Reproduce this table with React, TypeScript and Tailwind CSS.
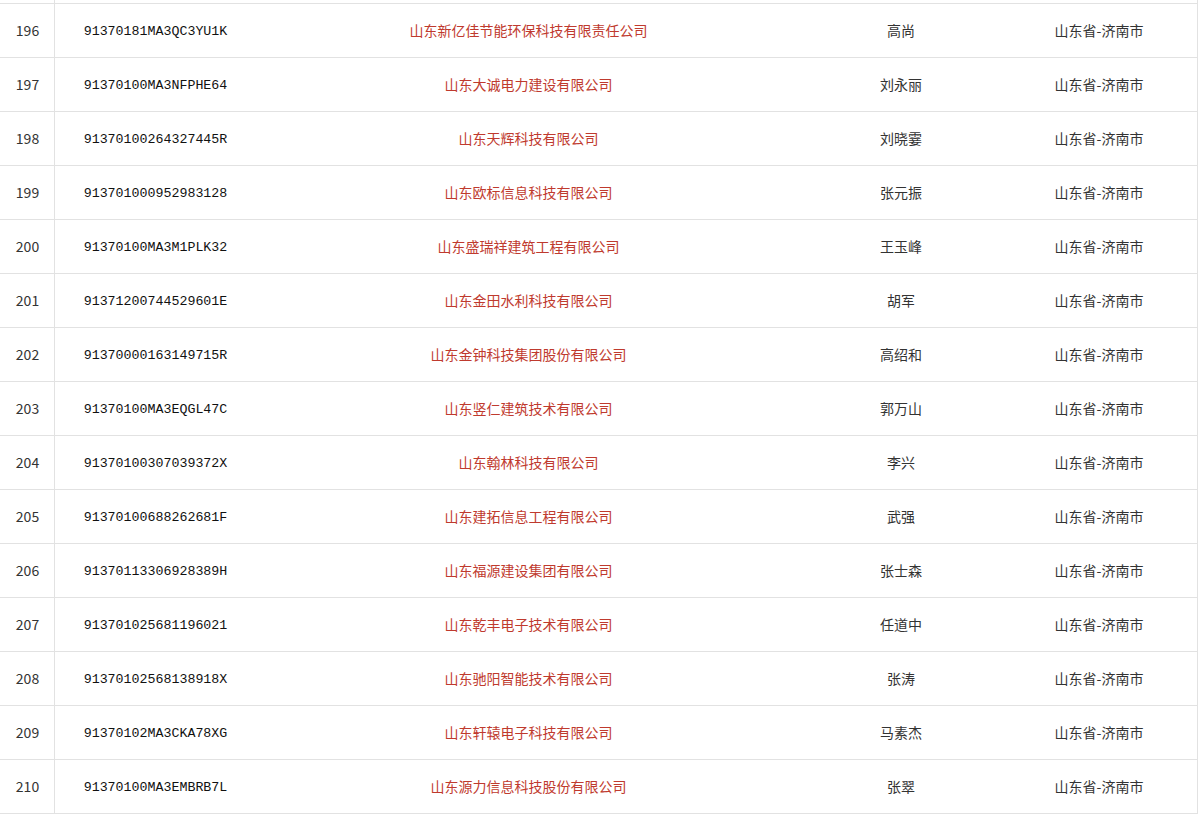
import React from 'react';

interface Row {
  no: number;
  code: string;
  company: string;
  person: string;
  region: string;
}

const rows: Row[] = [
  { no: 196, code: '91370181MA3QC3YU1K', company: '山东新亿佳节能环保科技有限责任公司', person: '高尚', region: '山东省-济南市' },
  { no: 197, code: '91370100MA3NFPHE64', company: '山东大诚电力建设有限公司', person: '刘永丽', region: '山东省-济南市' },
  { no: 198, code: '91370100264327445R', company: '山东天辉科技有限公司', person: '刘晓霎', region: '山东省-济南市' },
  { no: 199, code: '913701000952983128', company: '山东欧标信息科技有限公司', person: '张元振', region: '山东省-济南市' },
  { no: 200, code: '91370100MA3M1PLK32', company: '山东盛瑞祥建筑工程有限公司', person: '王玉峰', region: '山东省-济南市' },
  { no: 201, code: '91371200744529601E', company: '山东金田水利科技有限公司', person: '胡军', region: '山东省-济南市' },
  { no: 202, code: '91370000163149715R', company: '山东金钟科技集团股份有限公司', person: '高绍和', region: '山东省-济南市' },
  { no: 203, code: '91370100MA3EQGL47C', company: '山东竖仁建筑技术有限公司', person: '郭万山', region: '山东省-济南市' },
  { no: 204, code: '91370100307039372X', company: '山东翰林科技有限公司', person: '李兴', region: '山东省-济南市' },
  { no: 205, code: '91370100688262681F', company: '山东建拓信息工程有限公司', person: '武强', region: '山东省-济南市' },
  { no: 206, code: '91370113306928389H', company: '山东福源建设集团有限公司', person: '张士森', region: '山东省-济南市' },
  { no: 207, code: '913701025681196021', company: '山东乾丰电子技术有限公司', person: '任道中', region: '山东省-济南市' },
  { no: 208, code: '91370102568138918X', company: '山东驰阳智能技术有限公司', person: '张涛', region: '山东省-济南市' },
  { no: 209, code: '91370102MA3CKA78XG', company: '山东轩辕电子科技有限公司', person: '马素杰', region: '山东省-济南市' },
  { no: 210, code: '91370100MA3EMBRB7L', company: '山东源力信息科技股份有限公司', person: '张翠', region: '山东省-济南市' },
];

const cjk = { fontFamily: '"Microsoft YaHei", "Noto Sans CJK SC", "Noto Sans", sans-serif' };
const mono = { fontFamily: '"Liberation Mono", "Noto Sans CJK SC", monospace' };

export default function App() {
  return (
    <div className="w-[1199px] h-[815px] overflow-hidden bg-white" style={cjk}>
      {/* tail of the previous row, cut off by the viewport */}
      <div className="w-[1198px] h-[4px] border-b border-r border-[#e2e2e2] flex">
        <div className="w-[55px] h-full border-r border-[#e2e2e2]" />
      </div>
      <div className="w-[1198px] border-r border-[#e2e2e2]">
        {rows.map((r) => (
          <div
            key={r.no}
            className="grid grid-cols-[55px_201px_545px_200px_196px] h-[54px] border-b border-[#e2e2e2] items-center text-[14px] text-[#333]"
          >
            <div className="h-full flex items-center justify-center border-r border-[#e2e2e2] pl-[1px]">{r.no}</div>
            <div className="text-center text-[13.3px] text-[#111] pt-[3px]" style={mono}>{r.code}</div>
            <div className="text-center text-[#bf3a2e]">{r.company}</div>
            <div className="text-center">{r.person}</div>
            <div className="text-center">{r.region}</div>
          </div>
        ))}
      </div>
    </div>
  );
}
